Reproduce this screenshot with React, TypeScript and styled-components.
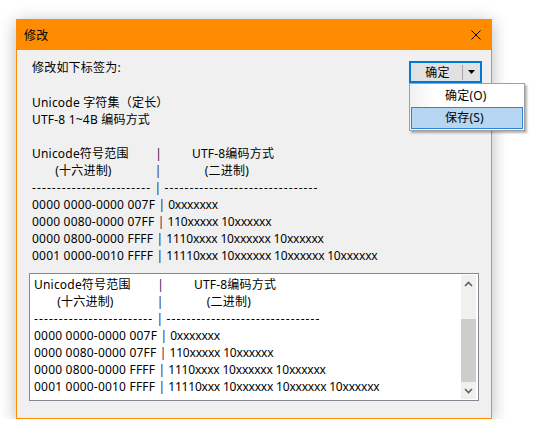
import { createGlobalStyle } from 'styled-components'
import styled from 'styled-components'

const GlobalStyle = createGlobalStyle`
  body {
    margin: 0;
    background: #ffffff;
    font-family: "Noto Sans", "Noto Sans CJK SC", sans-serif;
    font-size: 12px;
    color: #000;
  }
`

const Desk = styled.div`
  padding: 19px 0 0 16px;
`

const Window = styled.div`
  width: 476px;
  height: 400px;
  box-sizing: border-box;
  border: 1px solid #ff8c00;
  background: #f0f0f0;
  display: flex;
  flex-direction: column;
  box-shadow: 0 3px 16px rgba(0, 0, 0, 0.28);
`

const TitleBar = styled.div`
  height: 30px;
  background: #ff8c00;
  display: flex;
  align-items: center;
  justify-content: space-between;
  padding: 0 10px 0 7px;
`

const Title = styled.span`
  font-size: 12px;
  letter-spacing: 0.2px;
`

const CloseIcon = styled.svg`
  width: 10px;
  height: 10px;
`

const Body = styled.div`
  flex: 1;
  padding: 11px 12px 0 12px;
  display: flex;
  flex-direction: column;
`

const TopRow = styled.div`
  display: flex;
  justify-content: space-between;
  align-items: flex-start;
`

const Label = styled.span`
  padding-left: 3px;
  margin-top: -2px;
  line-height: 17px;
  letter-spacing: 0.2px;
`

const SplitButton = styled.div`
  position: relative;
  width: 73px;
  height: 22px;
  margin-right: -3px;
  box-sizing: border-box;
  border: 2px solid #0078d7;
  background: #e1e1e1;
  display: flex;
  align-items: center;
`

const ButtonText = styled.span`
  flex: 1;
  text-align: center;
  padding-left: 2px;
  letter-spacing: 0.2px;
`

const Separator = styled.span`
  width: 1px;
  height: 15px;
  background: #a6a6a6;
`

const ArrowPart = styled.span`
  width: 17px;
  display: flex;
  justify-content: center;
`

const Menu = styled.div`
  position: absolute;
  top: 20px;
  left: -2px;
  width: 116px;
  box-sizing: border-box;
  border: 1px solid #a0a0a0;
  padding: 1px;
  background: linear-gradient(to right, #f1f1f1 0px, #ffffff 24px);
  box-shadow: 2px 2px 2px rgba(0, 0, 0, 0.3);
  z-index: 2;
`

const MenuItem = styled.div<{ $active?: boolean }>`
  height: 22px;
  box-sizing: border-box;
  line-height: 20px;
  padding-left: 33px;
  border: 1px solid ${(p) => (p.$active ? '#2b84d6' : 'transparent')};
  background: ${(p) => (p.$active ? '#b7d6f2' : 'transparent')};
  letter-spacing: 0.2px;
`

const TextBlock = styled.div`
  margin-top: 11px;
  padding-left: 3px;
`

const Line = styled.div`
  height: 17px;
  line-height: 17px;
  white-space: pre;
  letter-spacing: 0.2px;
`

const Pipe = styled.span`
  color: #35104a;
`

const Dashes = styled.span`
  letter-spacing: 1.1px;
`

const Bits = styled.span`
  letter-spacing: -0.2px;
`

const TextBox = styled.div`
  margin-top: 9px;
  height: 128px;
  box-sizing: border-box;
  border: 1px solid #828790;
  padding: 1px;
  background: #ffffff;
  display: flex;
`

const BoxContent = styled.div`
  flex: 1;
  overflow: hidden;
  display: flex;
  flex-direction: column;
  justify-content: flex-end;
  padding: 0 0 4px 3px;
`

const ScrollBar = styled.div`
  width: 15px;
  margin-right: 1px;
  background: #f0f0f0;
  display: flex;
  flex-direction: column;
`

const ScrollArrow = styled.div`
  height: 17px;
  display: flex;
  align-items: center;
  justify-content: center;
`

const Track = styled.div`
  flex: 1;
  display: flex;
  flex-direction: column;
`

const Thumb = styled.div`
  margin-top: auto;
  background: #cdcdcd;
`

type Row = { left: string; right: string; kind?: 'head' | 'dashes' }

const intro = ['Unicode 字符集（定长）', 'UTF-8 1~4B 编码方式', '']

const table: Row[] = [
  { left: 'Unicode符号范围        ', right: '         UTF-8编码方式', kind: 'head' },
  { left: '       (十六进制)             ', right: '             (二进制)', kind: 'head' },
  { left: '------------------------', right: '-------------------------------', kind: 'dashes' },
  { left: '0000 0000-0000 007F ', right: ' 0xxxxxxx' },
  { left: '0000 0080-0000 07FF ', right: ' 110xxxxx 10xxxxxx' },
  { left: '0000 0800-0000 FFFF ', right: ' 1110xxxx 10xxxxxx 10xxxxxx' },
  { left: '0001 0000-0010 FFFF ', right: ' 11110xxx 10xxxxxx 10xxxxxx 10xxxxxx' },
]

// the text box is scrolled to its end: the intro lines sit above the view
const visibleRows = table

const TableLine = ({ row }: { row: Row }) => {
  if (row.kind === 'dashes') {
    return (
      <Line>
        <Dashes>{row.left}</Dashes> <Pipe>|</Pipe> <Dashes>{row.right}</Dashes>
      </Line>
    )
  }
  return (
    <Line>
      {row.left}
      <Pipe>|</Pipe>
      {row.kind === 'head' ? row.right : <Bits>{row.right}</Bits>}
    </Line>
  )
}

const Chevron = ({ up }: { up?: boolean }) => (
  <svg width="9" height="6" viewBox="0 0 9 6">
    <path
      d={up ? 'M1 5 L4.5 1.5 L8 5' : 'M1 1 L4.5 4.5 L8 1'}
      fill="none"
      stroke="#606060"
      strokeWidth="1.6"
    />
  </svg>
)

export default function App() {
  const totalLines = intro.length + table.length
  const thumbPct = (visibleRows.length / totalLines) * 100

  return (
    <Desk>
      <GlobalStyle />
      <Window>
        <TitleBar>
          <Title>修改</Title>
          <CloseIcon viewBox="0 0 10 10">
            <path d="M0.5 0.5 L9.5 9.5 M9.5 0.5 L0.5 9.5" stroke="#000" strokeWidth="1" />
          </CloseIcon>
        </TitleBar>
        <Body>
          <TopRow>
            <Label>修改如下标签为:</Label>
            <SplitButton>
              <ButtonText>确定</ButtonText>
              <Separator />
              <ArrowPart>
                <svg width="7" height="4" viewBox="0 0 7 4">
                  <path d="M0 0 L7 0 L3.5 4 Z" fill="#000" />
                </svg>
              </ArrowPart>
              <Menu>
                <MenuItem>确定(O)</MenuItem>
                <MenuItem $active>保存(S)</MenuItem>
              </Menu>
            </SplitButton>
          </TopRow>
          <TextBlock>
            {intro.map((t, i) => (
              <Line key={i}>{t}</Line>
            ))}
            {table.map((r, i) => (
              <TableLine key={i} row={r} />
            ))}
          </TextBlock>
          <TextBox>
            <BoxContent>
              {visibleRows.map((r, i) => (
                <TableLine key={i} row={r} />
              ))}
            </BoxContent>
            <ScrollBar>
              <ScrollArrow>
                <Chevron up />
              </ScrollArrow>
              <Track>
                <Thumb style={{ height: `${thumbPct}%` }} />
              </Track>
              <ScrollArrow>
                <Chevron />
              </ScrollArrow>
            </ScrollBar>
          </TextBox>
        </Body>
      </Window>
    </Desk>
  )
}
